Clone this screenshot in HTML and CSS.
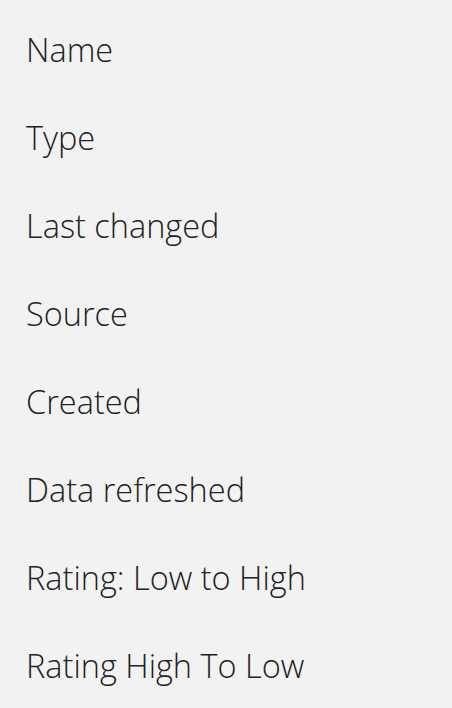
FILE: index.html
```html
<!DOCTYPE html>
<html>
<head>
<meta charset="utf-8">
<link rel="stylesheet" href="styles.css">
</head>
<body>
<ul class="sort-list">
  <li class="sort-item">Name</li>
  <li class="sort-item">Type</li>
  <li class="sort-item">Last changed</li>
  <li class="sort-item">Source</li>
  <li class="sort-item">Created</li>
  <li class="sort-item">Data refreshed</li>
  <li class="sort-item">Rating: Low to High</li>
  <li class="sort-item">Rating High To Low</li>
</ul>
</body>
</html>
```
FILE: styles.css
```css
html, body {
  margin: 0;
  padding: 0;
  background: #f2f2f2;
}
body {
  font-family: "Open Sans", sans-serif;
  color: #222222;
}
.sort-list {
  list-style: none;
  margin: 0;
  padding: 6px 0 0 26px;
}
.sort-item {
  font-size: 32.5px;
  font-weight: 300;
  height: 88px;
  line-height: 88px;
}
```
